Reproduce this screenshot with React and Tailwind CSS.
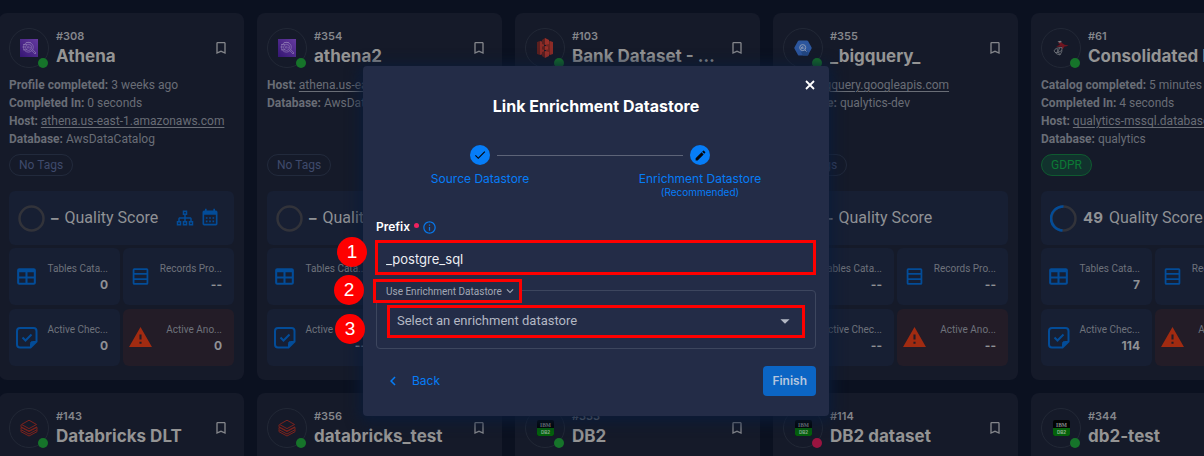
import React from "react";
import { MdCheck, MdEdit, MdInfoOutline, MdKeyboardArrowDown, MdKeyboardArrowLeft, MdArrowDropDown } from "react-icons/md";

const cards = [
  { id: "#308", name: "Athena", logo: "athena", status: "ok", score: "–", tools: true, rows: [["Profile completed:", "3 weeks ago"], ["Completed In:", "0 seconds"]], host: "athena.us-east-1.amazonaws.com", db: "AwsDataCatalog", tag: "No Tags", values: ["0", "--", "0", "0"] },
  { id: "#354", name: "athena2", logo: "athena", status: "ok", score: "–", rows: [], host: "athena.us-east-1.amazonaws.com", db: "AwsDataCatalog", tag: "No Tags", values: ["--", "--", "--", "--"] },
  { id: "#103", name: "Bank Dataset - Staging", logo: "s3", status: "ok", score: "–", rows: [], host: "s3a://qualytics-bank", db: "bank", tag: "No Tags", values: ["--", "--", "--", "--"] },
  { id: "#355", name: "_bigquery_", logo: "bigquery", status: "ok", score: "–", rows: [], host: "bigquery.googleapis.com", db: "qualytics-dev", tag: "No Tags", values: ["--", "--", "--", "--"] },
  { id: "#61", name: "Consolidated Balance", logo: "mssql", status: "ok", score: "49", rows: [["Catalog completed:", "5 minutes ago"], ["Completed In:", "4 seconds"]], host: "qualytics-mssql.database.windows.net", db: "qualytics", tag: "GDPR", values: ["7", "--", "114", "--"] },
  { id: "#143", name: "Databricks DLT", logo: "databricks", status: "ok", score: "–", rows: [], host: "databricks.com", db: "dlt", tag: "No Tags", values: ["--", "--", "--", "--"] },
  { id: "#356", name: "databricks_test", logo: "databricks", status: "ok", score: "–", rows: [], host: "databricks.com", db: "test", tag: "No Tags", values: ["--", "--", "--", "--"] },
  { id: "#333", name: "DB2", logo: "db2", status: "ok", score: "–", rows: [], host: "db2.qualytics.io", db: "db2", tag: "No Tags", values: ["--", "--", "--", "--"] },
  { id: "#114", name: "DB2 dataset", logo: "db2", status: "bad", score: "–", rows: [], host: "db2.qualytics.io", db: "db2", tag: "No Tags", values: ["--", "--", "--", "--"] },
  { id: "#344", name: "db2-test", logo: "db2", status: "ok", score: "–", rows: [], host: "db2.qualytics.io", db: "db2", tag: "No Tags", values: ["--", "--", "--", "--"] },
];

function Logo({ kind }) {
  if (kind === "athena")
    return (
      <svg viewBox="0 0 18 18" className="size-[18px]" aria-hidden="true">
        <defs>
          <linearGradient id="ath" x1="0" y1="1" x2="1" y2="0">
            <stop offset="0" stopColor="#351673" />
            <stop offset="1" stopColor="#653aa0" />
          </linearGradient>
        </defs>
        <rect width="18" height="18" fill="url(#ath)" />
        <g fill="none" stroke="#8f7ab5" strokeWidth="0.7">
          <circle cx="8.4" cy="8.2" r="4.9" />
          <circle cx="8.6" cy="8.4" r="3" />
          <path d="M3 5.500h4M2.400 8h3M3 10.800h4M6 3.600h5M7.400 7.400v2M8.800 6.800v2.800M10.200 8v1.400M11.600 11.400l3.400 3.600 1-1-3.400-3.600" />
        </g>
      </svg>
    );
  if (kind === "s3")
    return (
      <svg viewBox="0 0 18 20" className="h-5 w-[18px]" aria-hidden="true">
        <path d="M1 4l3-1v14l-3-1z" fill="#5c1f1e" />
        <path d="M4 3l4 1v12l-4 1z" fill="#8c2b26" />
        <path d="M17 4l-3-1v14l3-1z" fill="#8c2b26" />
        <path d="M14 3l-4 1v12l4 1z" fill="#6e2420" />
        <path d="M9 0l4 2v4l-4 1zM9 8l3 .5v3L9 12zM9 13l4 1v4l-4 2z" fill="#982f29" />
        <path d="M9 0L6 2v4l3 1zM9 8l-3 .5v3L9 12zM9 13l-3 1v4l3 2z" fill="#5c1f1e" />
      </svg>
    );
  if (kind === "bigquery")
    return (
      <svg viewBox="0 0 18 16" className="h-4 w-[18px]" aria-hidden="true">
        <path d="M5 .5h8q.6 0 1 .6l3.500 6.200q.4.700 0 1.400l-3.500 6.200q-.4.600-1 .6H5q-.6 0-1-.6L.5 8.700q-.4-.7 0-1.400L4 1.100Q4.400.5 5 .5z" fill="#2c569d" />
        <path d="M12 10l3 3-1 2.500H9L7 12z" fill="#234883" />
        <circle cx="8.700" cy="7.600" r="3" fill="none" stroke="#8c9bb5" />
        <path d="M7.500 7v1.800M8.700 6.200v2.800M9.900 7.600v1M11 10l1.600 1.600" stroke="#8c9bb5" strokeWidth="0.900" />
      </svg>
    );
  if (kind === "mssql")
    return (
      <svg viewBox="0 0 16 16" className="size-4" aria-hidden="true">
        <path d="M5 3q3-2 4 0 2 2 6.500 2.600-2 .8-4 1-1 2.200-2.500 2.700L9 6.500Q7 7 3 6.500l4-1.700z" fill="#6f1520" />
        <path d="M4.500 1.500l3-.8 1.500 1.300-2.500.8z" fill="#7b7b80" />
        <g fill="none" stroke="#74777e" strokeWidth="0.800">
          <path d="M1 11q1-3.500 8-3.500 .5 4.500-2 7.500-4-.5-6-4z" />
          <path d="M2 12.500q4 .5 6.800-2M4 8.800q1 4 3 6M6.500 7.800q-.6 3-3 5.600" />
        </g>
      </svg>
    );
  if (kind === "databricks")
    return (
      <svg viewBox="0 0 18 18" className="size-[18px]" aria-hidden="true" fill="none" stroke="#7b221d" strokeWidth="1">
        <path d="M1.500 5.500L9 1.200l7.500 4.300L9 9.600zM1 5.800v2L9 12l8-4.200M1 10.500v-2M1 8.300l8 4.200 8-4.200v2.400L9 15l-8-4.300v2L9 17l8-4.300v-2" />
      </svg>
    );
  return (
    <svg viewBox="0 0 17 16" className="h-4 w-[17px]" aria-hidden="true">
      <rect width="17" height="16" rx="2" fill="#020403" />
      <path d="M0 8h17v6a2 2 0 0 1-2 2H2a2 2 0 0 1-2-2z" fill="#04620b" />
      <text x="8.500" y="6.500" textAnchor="middle" fontSize="5.500" fontWeight="700" fill="#85888c" fontFamily="Liberation Serif, serif">IBM</text>
      <text x="8.500" y="13.500" textAnchor="middle" fontSize="4.500" fontWeight="700" fill="#8fb191" fontFamily="Liberation Sans, sans-serif">DB2</text>
    </svg>
  );
}

const glyphs = {
  bookmark: "M17,18L12,15.82L7,18V5H17M17,3H7A2,2 0 0,0 5,5V21L12,18L19,21V5C19,3.89 18.1,3 17,3Z",
  table: "M5,4H19A2,2 0 0,1 21,6V18A2,2 0 0,1 19,20H5A2,2 0 0,1 3,18V6A2,2 0 0,1 5,4M5,8V12H11V8H5M13,8V12H19V8H13M5,14V18H11V14H5M13,14V18H19V14H13Z",
  rows: "M6,4H18A1.500,1.500 0 0,1 19.500,5.500V18.500A1.500,1.500 0 0,1 18,20H6A1.500,1.500 0 0,1 4.500,18.500V5.500A1.500,1.500 0 0,1 6,4M6.200,5.700V8.600H17.800V5.700H6.200M6.200,10.300V13.700H17.800V10.300H6.200M6.200,15.400V18.300H17.800V15.400H6.200Z",
  alert: "M13 14H11V9H13M13 18H11V16H13M1 21H23L12 2L1 21Z",
  sitemap: "M9 2V8H11V11H5C3.890 11 3 11.890 3 13V16H1V22H7V16H5V13H11V16H9V22H15V16H13V13H19V16H17V22H23V16H21V13C21 11.890 20.110 11 19 11H13V8H15V2H9M11 4H13V6H11V4M3 18H5V20H3V18M11 18H13V20H11V18M19 18H21V20H19V18Z",
  calendar: "M7 11H9V13H7V11M11 11H13V13H11V11M15 11H17V13H15V11M7 15H9V17H7V15M11 15H13V17H11V15M15 15H17V17H15V15M5 3H6V1H8V3H16V1H18V3H19A2 2 0 0 1 21 5V19A2 2 0 0 1 19 21H5A2 2 0 0 1 3 19V5A2 2 0 0 1 5 3M5 8V19H19V8H5Z",
};

function Glyph({ name, className }) {
  return (
    <svg viewBox="0 0 24 24" className={className} fill="currentColor" fillRule="evenodd" aria-hidden="true">
      <path d={glyphs[name]} />
    </svg>
  );
}

function NoteCheck() {
  return (
    <svg viewBox="0 0 25 25" className="size-[25px]" fill="none" stroke="currentColor" strokeWidth="2" aria-hidden="true">
      <path d="M16.500 22.500H6a3 3 0 0 1-3-3V6a3 3 0 0 1 3-3h13.500a3 3 0 0 1 3 3v10.500z" />
      <path d="M16.500 22.500v-4a2 2 0 0 1 2-2h4z" fill="currentColor" strokeWidth="1" />
      <path d="M8.500 12.500l3 3 6-6" />
    </svg>
  );
}

function Tile({ icon, label, value, danger }) {
  return (
    <div className={danger ? "flex h-[57px] items-center rounded-md bg-[#231c27] pr-3 pl-[5px]" : "flex h-[57px] items-center rounded-md bg-[#171f33] pr-3 pl-[5px]"}>
      <span className={danger ? "shrink-0 text-[#a12b11]" : "shrink-0 text-[#034c98]"}>{icon}</span>
      <div className="ml-auto flex flex-col">
        <span className="font-['Roboto',sans-serif] text-[10px] leading-4 whitespace-nowrap text-[#6e727b]">{label}</span>
        <span className="text-right text-[12px] leading-4 font-bold text-[#8f9195]">{value}</span>
      </div>
    </div>
  );
}

function Card({ c }) {
  const scored = c.score !== "–";
  return (
    <article className="flex flex-col rounded-lg bg-[#151a29] px-[10px] pt-[15px] pb-[14px]">
      <header className="flex items-center">
        <div className="relative flex size-10 shrink-0 items-center justify-center rounded-full border border-[#222836]">
          <Logo kind={c.logo} />
          <span className={c.status === "ok" ? "absolute right-0 -bottom-px size-[10px] rounded-full bg-[#16742a]" : "absolute right-0 -bottom-px size-[10px] rounded-full bg-[#9a1440]"} />
        </div>
        <div className="flex w-[154px] flex-col pl-[7px]">
          <span className="text-[11px] leading-4 font-semibold text-[#84868b]">{c.id}</span>
          <h2 className="truncate text-[17px] leading-6 font-bold text-[#949494]">{c.name}</h2>
        </div>
        <button type="button" aria-label="Bookmark" className="ml-auto pr-[5px] text-[#84868b]">
          <Glyph name="bookmark" className="size-4" />
        </button>
      </header>
      <div className="mt-2 h-[72px] font-['Roboto',sans-serif] text-[12px] leading-[18px] whitespace-nowrap text-[#696d76]">
        {c.rows.map(([k, v]) => (
          <p key={k}><b className="font-bold">{k}</b> {v}</p>
        ))}
        <p><b className="font-bold">Host:</b> <a href="#host" className="underline underline-offset-2">{c.host}</a></p>
        <p><b className="font-bold">Database:</b> {c.db}</p>
      </div>
      <span className={c.tag === "GDPR" ? "mt-[6px] flex h-[22px] items-center self-start rounded-full border border-[#0f5a30] bg-[#11322d] px-[9px] font-['Roboto',sans-serif] text-[12px] text-[#0c7a35]" : "mt-[6px] flex h-[22px] items-center self-start rounded-full border border-[#222a3c] px-[9px] font-['Roboto',sans-serif] text-[12px] text-[#3f4a6c]"}>
        {c.tag}
      </span>
      <div className="mt-[15px] flex h-[54px] items-center rounded-md bg-[#171f33] pr-[14px] pl-[9px]">
        <svg viewBox="0 0 27 27" className="size-[27px] shrink-0" fill="none" strokeWidth="2.500" aria-hidden="true">
          <circle cx="13.500" cy="13.500" r="12" stroke="#32333a" />
          {scored && <path d="M13.500 1.500A12 12 0 0 0 12.500 25.500" stroke="#034c98" />}
        </svg>
        <span className="ml-[6px] text-[15px] font-bold text-[#8f9195]">{c.score}</span>
        <span className="ml-[6px] font-['Roboto',sans-serif] text-[16px] whitespace-nowrap text-[#8f9195]">Quality Score</span>
        {c.tools && (
          <span className="ml-auto flex items-center gap-[6px] text-[#034c98]">
            <Glyph name="sitemap" className="size-[18px]" />
            <Glyph name="calendar" className="size-5" />
          </span>
        )}
      </div>
      <div className="mt-[3px] grid grid-cols-2 gap-x-[3px] gap-y-1">
        <Tile icon={<Glyph name="table" className="size-[25px]" />} label="Tables Cata..." value={c.values[0]} />
        <Tile icon={<Glyph name="rows" className="size-[25px]" />} label="Records Pro..." value={c.values[1]} />
        <Tile icon={<NoteCheck />} label="Active Chec..." value={c.values[2]} />
        <Tile icon={<Glyph name="alert" className="size-[25px]" />} label="Active Ano..." value={c.values[3]} danger />
      </div>
    </article>
  );
}

function Marker({ n, className }) {
  return (
    <span className={`absolute flex size-[30px] items-center justify-center rounded-full bg-[#fe0000] font-['Liberation_Sans',sans-serif] text-[19px] text-white ${className}`}>
      {n}
    </span>
  );
}

function Step({ icon, title, note }) {
  return (
    <li className="flex flex-1 flex-col items-center text-[#067df7]">
      <span className="flex size-5 items-center justify-center rounded-full bg-[#067df7] text-[#05070d]">{icon}</span>
      <span className="mt-[6px] text-[12px] leading-4">{title}</span>
      {note && <span className="text-[10px] leading-[10px]">{note}</span>}
    </li>
  );
}

function Dialog() {
  return (
    <section role="dialog" aria-label="Link Enrichment Datastore" className="relative flex w-[466px] flex-col rounded bg-[#232c47] px-[13px] pt-7 pb-5 shadow-[0_2px_14px_4px_rgba(10,28,58,0.9)]">
      <button type="button" aria-label="Close" className="absolute top-[14px] right-[14px] text-white">
        <svg viewBox="0 0 10 10" className="size-[10px]" fill="none" stroke="currentColor" strokeWidth="1.800" aria-hidden="true">
          <path d="M1 1l8 8M9 1l-8 8" />
        </svg>
      </button>
      <h1 className="text-center text-[16px] leading-6 font-bold text-white">Link Enrichment Datastore</h1>
      <ol className="relative mt-[27px] mr-[6px] -ml-[6px] flex h-[54px]">
        <Step icon={<MdCheck className="size-[14px]" />} title="Source Datastore" />
        <Step icon={<MdEdit className="size-[13px]" />} title="Enrichment Datastore" note="(Recommended)" />
        <li aria-hidden="true" className="absolute top-[10px] right-[127px] left-[127px] h-px bg-[#5d6478]" />
      </ol>
      <div className="mt-5 flex h-4 items-center text-[12px]">
        <label htmlFor="prefix" className="font-semibold text-white">Prefix</label>
        <span className="mb-1 ml-1 size-[5px] rounded-full bg-[#f0225f]" />
        <MdInfoOutline className="ml-[3px] size-[15px] text-[#0877e8]" />
      </div>
      <div className="relative mt-[5px] -ml-px border-[3px] border-[#fe0000]">
        <input id="prefix" defaultValue="_postgre_sql" className="block h-[29px] w-full bg-transparent px-2 pt-[2px] text-[13px] text-[#eceef3] outline-none" />
        <Marker n="1" className="-top-[6px] -left-[41px]" />
      </div>
      <div className="relative mt-[15px] rounded-sm border border-[#3d465e] px-[10px] pt-[14px] pb-[10px]">
        <button type="button" className="absolute -top-3 -left-1 flex h-6 w-[149px] items-center gap-px border-[3px] border-[#fe0000] bg-[#232c47] pl-[10px] font-['Roboto',sans-serif] text-[10px] whitespace-nowrap text-[#a2a7b4]">
          Use Enrichment Datastore
          <MdKeyboardArrowDown className="size-[14px] shrink-0" />
        </button>
        <Marker n="2" className="-top-4 -left-[43px]" />
        <div className="relative border-[3px] border-[#fe0000]">
          <select aria-label="Enrichment datastore" className="block h-[27px] w-full appearance-none bg-transparent px-[7px] pb-px font-['Roboto',sans-serif] text-[13px] text-[#b3b8c4] outline-none">
            <option>Select an enrichment datastore</option>
          </select>
          <MdArrowDropDown className="pointer-events-none absolute top-[2px] right-[6px] size-[22px] text-[#b3b8c4]" />
        </div>
        <Marker n="3" className="top-[23px] -left-[42px]" />
      </div>
      <div className="mt-[17px] flex items-center justify-between">
        <button type="button" className="flex items-center gap-[10px] pl-2 text-[12px] text-[#067df7]">
          <MdKeyboardArrowLeft className="size-[18px]" />
          Back
        </button>
        <button type="button" className="h-[30px] rounded-sm bg-[#0b65c4] px-[9px] text-[12px] font-semibold text-[#b5c6de]">Finish</button>
      </div>
    </section>
  );
}

export default function App() {
  return (
    <div className="grid h-screen grid-cols-1 overflow-hidden bg-[#0b1120] font-['Inter','Roboto',sans-serif]">
      <main className="col-start-1 row-start-1 -ml-px grid grid-cols-[repeat(5,minmax(245px,1fr))] content-start gap-[13px] pt-[13px]">
        {cards.map((c) => (
          <Card key={c.id} c={c} />
        ))}
      </main>
      <div className="z-10 col-start-1 row-start-1 flex justify-center self-start pt-[66px] pr-3">
        <Dialog />
      </div>
    </div>
  );
}
